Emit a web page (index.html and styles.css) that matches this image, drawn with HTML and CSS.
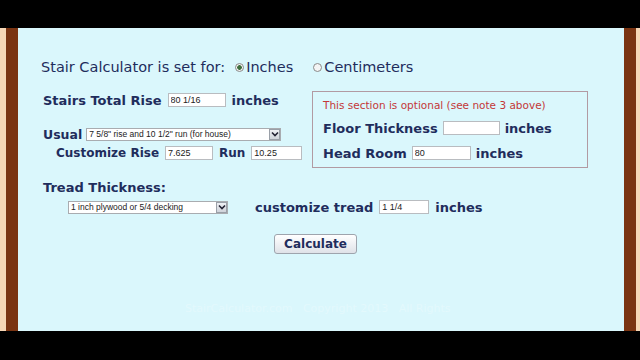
FILE: index.html
```html
<!DOCTYPE html>
<html lang="en">
  <head>
    <meta charset="UTF-8" />
    <meta name="viewport" content="width=device-width, initial-scale=1.0" />
    <title>Stair Calculator</title>
    <link rel="stylesheet" href="styles.css">
  </head>
  <body>
    <div class="frame">
      <div class="edge-light"></div>
      <div class="edge-dark"></div>

      <div class="page">
        <!-- units -->
        <div class="intro">
          <span>Stair Calculator is set for:</span>
          <label class="unit"><input type="radio" name="unit" checked> Inches</label>
          <label class="unit"><input type="radio" name="unit"> Centimeters</label>
        </div>

        <div class="middle">
          <div class="left-col">
            <div class="row">
              <span class="label">Stairs Total Rise</span>
              <input class="field w58" type="text" value="80 1/16">
              <span class="label">inches</span>
            </div>
            <div class="row usual">
              <span class="label">Usual</span>
              <div class="select-wrap">
                <select class="select w195">
                  <option>7 5/8" rise and 10 1/2" run (for house)</option>
                </select>
                <span class="arrow"><svg width="8" height="6" viewBox="0 0 8 6"><path d="M1 1.5 L4 4.5 L7 1.5" fill="none" stroke="#223" stroke-width="1.6"/></svg></span>
              </div>
            </div>
            <div class="row custom">
              <span class="label">Customize Rise</span>
              <input class="field w48" type="text" value="7.625">
              <span class="label">Run</span>
              <input class="field w51" type="text" value="10.25">
            </div>
          </div>

          <div class="optional">
            <p class="note">This section is optional (see note 3 above)</p>
            <div class="row">
              <span class="label">Floor Thickness</span>
              <input class="field w57" type="text" value="">
              <span class="label">inches</span>
            </div>
            <div class="row head">
              <span class="label">Head Room</span>
              <input class="field w59" type="text" value="80">
              <span class="label">inches</span>
            </div>
          </div>
        </div>

        <div class="tread-title label">Tread Thickness:</div>
        <div class="row tread">
          <div class="select-wrap">
            <select class="select w160">
              <option>1 inch plywood or 5/4 decking</option>
            </select>
            <span class="arrow"><svg width="8" height="6" viewBox="0 0 8 6"><path d="M1 1.5 L4 4.5 L7 1.5" fill="none" stroke="#223" stroke-width="1.6"/></svg></span>
          </div>
          <span class="label spacer">customize tread</span>
          <input class="field w50" type="text" value="1 1/4">
          <span class="label">inches</span>
        </div>

        <div class="actions">
          <button class="calc" type="button">Calculate</button>
        </div>

        <div class="footer">StairCalculator.com &nbsp; Copyright 2013 &nbsp; All Rights</div>
      </div>

      <div class="edge-dark"></div>
      <div class="edge-light right"></div>
    </div>
  </body>
</html>
```

FILE: styles.css
```css
body {
  margin: 0;
  background: #000;
  font-family: "Comic Sans MS", "DejaVu Sans", sans-serif;
  color: #1f2d5c;
}

.frame {
  display: flex;
  height: 303px;
  margin-top: 28px;
}

.edge-light {
  width: 6px;
  background: #f6d7b6;
}
.edge-light.right {
  width: 4px;
}

.edge-dark {
  width: 12px;
  background: #7a3412;
}

.page {
  flex: 1;
  background: #daf7fc;
  padding: 30px 0 0 23px;
  box-sizing: border-box;
}

.intro {
  display: flex;
  align-items: center;
  height: 18px;
  font-size: 14.5px;
  white-space: nowrap;
}

.unit {
  display: flex;
  align-items: center;
  margin-left: 10px;
  gap: 2px;
}
.unit + .unit {
  margin-left: 20px;
}

.unit input {
  appearance: none;
  width: 9px;
  height: 9px;
  margin: 0;
  border: 1px solid #8a8a8a;
  border-radius: 50%;
  background: #f4f4f4;
}
.unit input:checked {
  background: radial-gradient(circle, #3d6e3d 2px, #f4f4f4 2.6px);
}

.row {
  display: flex;
  align-items: center;
  height: 14px;
  gap: 6px;
  white-space: nowrap;
}

.label {
  font-size: 13px;
  font-weight: bold;
  white-space: nowrap;
}

.field {
  height: 14px;
  box-sizing: border-box;
  border: 1px solid #b9bcc0;
  background: #fff;
  padding: 0 2px;
  font-family: "Liberation Sans", Arial, sans-serif;
  font-size: 9px;
  color: #222;
  margin: 0;
}

.w48 { width: 48px; }
.w50 { width: 50px; }
.w51 { width: 51px; }
.w57 { width: 57px; }
.w58 { width: 58px; }
.w59 { width: 59px; }

.select-wrap {
  position: relative;
  height: 13px;
}

.select {
  display: block;
  appearance: none;
  height: 13px;
  box-sizing: border-box;
  border: 1px solid #a9acb0;
  background: #fff;
  padding: 0 2px;
  margin: 0;
  font-family: "Liberation Sans", Arial, sans-serif;
  font-size: 8.5px;
  color: #222;
}
.w195 { width: 195px; }
.w160 { width: 160px; }

.arrow {
  position: absolute;
  right: 1px;
  top: 1px;
  width: 11px;
  height: 11px;
  box-sizing: border-box;
  border: 1px solid #9aa0a8;
  background: linear-gradient(#eef0f4, #cfd3da);
  display: flex;
  align-items: center;
  justify-content: center;
}

.middle {
  display: flex;
  margin-top: 15px;
}

.left-col {
  width: 271px;
  padding: 2px 0 0 2px;
  box-sizing: border-box;
}

.usual {
  margin-top: 20px;
  gap: 4px;
}
.usual .label {
  font-size: 12.5px;
}

.custom {
  margin-top: 5px;
  padding-left: 13px;
  gap: 6px;
}
.custom .label {
  font-size: 12px;
}

.optional {
  width: 276px;
  height: 77px;
  box-sizing: border-box;
  border: 1px solid #b29aa2;
  padding: 6px 0 0 10px;
}

.optional .row {
  margin-top: 9px;
  gap: 5px;
}
.optional .row.head {
  margin-top: 11px;
}

.note {
  margin: 0;
  height: 14px;
  line-height: 14px;
  font-size: 10.5px;
  color: #c43838;
}

.tread-title {
  margin: 13px 0 0 2px;
  height: 14px;
  line-height: 14px;
}

.tread {
  margin: 5px 0 0 27px;
}
.spacer {
  margin-left: 21px;
}

.actions {
  margin-top: 19px;
  padding-left: 233px;
}

.calc {
  width: 83px;
  height: 20px;
  margin: 0;
  border: 1px solid #9ea4ad;
  border-radius: 3px;
  background: linear-gradient(#ffffff, #dfe2e8);
  font-family: inherit;
  font-size: 12px;
  font-weight: bold;
  color: #1f2d5c;
}

.footer {
  margin: 48px 0 0 144px;
  font-size: 11px;
  color: #e3f9fc;
}
```
